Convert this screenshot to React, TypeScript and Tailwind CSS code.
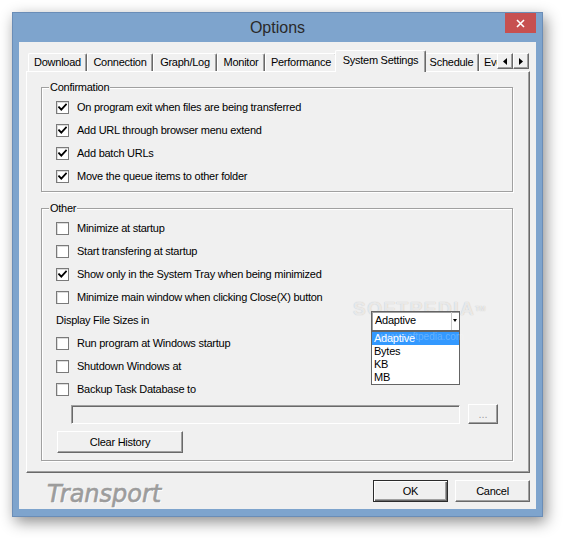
import React from 'react';

const CheckBox = ({ on = false }: { on?: boolean }) => (
  <span className="w-[13px] h-[13px] shrink-0 bg-white border border-[#7a7a7a] shadow-[inset_1px_1px_0_#dcdcdc] flex items-center justify-center">
    {on && (
      <svg width="9" height="9" viewBox="0 0 9 9" fill="none">
        <path d="M1 4.2 L3.3 6.6 L8 1.6" stroke="#000" strokeWidth="1.8" strokeLinecap="square" />
      </svg>
    )}
  </span>
);

const Row = ({ label, on }: { label: string; on?: boolean }) => (
  <div className="h-[23px] flex items-center gap-[8px]">
    <CheckBox on={on} />
    <span className="whitespace-nowrap">{label}</span>
  </div>
);

const raised =
  'bg-[#f0f0f0] border border-t-white border-l-white border-r-[#696969] border-b-[#696969] shadow-[inset_-1px_-1px_0_#a0a0a0]';

const Tab = ({ label, w, active = false }: { label: string; w: string; active?: boolean }) =>
  active ? (
    <div className={`${w} relative z-10 h-[22px] -mx-[2px] pb-[2px] flex items-center justify-center shrink-0 whitespace-nowrap bg-[#f0f0f0] border-t border-l border-t-white border-l-white border-r border-r-[#696969] shadow-[inset_-1px_0_0_#a0a0a0] rounded-t-[2px]`}>
      {label}
    </div>
  ) : (
    <div className={`${w} h-[18px] mb-[1px] flex items-center justify-center shrink-0 whitespace-nowrap bg-[#f0f0f0] border-t border-l border-t-white border-l-white border-r border-r-[#696969] shadow-[inset_-1px_0_0_#a0a0a0] rounded-t-[2px]`}>
      {label}
    </div>
  );

const Group = ({ title, children, className = '' }: { title: string; children: React.ReactNode; className?: string }) => (
  <div className={`relative w-[472px] border border-[#a0a0a0] shadow-[inset_1px_1px_0_#fff,1px_1px_0_#fff] pl-[14px] pt-[8px] ${className}`}>
    <span className="absolute left-[7px] -top-[7px] px-[1px] leading-[13px] bg-[#f0f0f0]">{title}</span>
    {children}
  </div>
);

export default function App() {
  return (
    <div className="w-[563px] h-[538px] bg-white pt-[12px] pl-[12px] font-['Liberation_Sans',Arial,sans-serif] text-[11px] tracking-[-0.25px] text-black">
      <div className="relative w-[531px] h-[505px] flex flex-col bg-[#7ea4cd] border border-[#6a8db7] shadow-[3px_5px_14px_rgba(0,0,0,0.45)]">
        {/* title bar */}
        <div className="h-[29px] flex items-center justify-center text-[16px] tracking-normal text-[#2a2a2a]">Options</div>
        <div className="absolute top-0 right-[6px] w-[31px] h-[20px] bg-[#c75050] flex items-center justify-center">
          <svg width="9" height="9" viewBox="0 0 9 9">
            <path d="M1 1 L8 8 M8 1 L1 8" stroke="#fff" strokeWidth="1.6" />
          </svg>
        </div>

        {/* client */}
        <div className="ml-[6px] w-[517px] h-[467px] bg-[#f0f0f0] pl-[7px] pt-[8px] flex flex-col">
          <div className="w-[504px]">
            <div className="relative z-10 h-[22px] flex">
              <div className="w-[471px] h-[22px] flex items-end overflow-hidden pl-[2px]">
                <Tab w="w-[59px]" label="Download" />
                <Tab w="w-[66px]" label="Connection" />
                <Tab w="w-[64px]" label="Graph/Log" />
                <Tab w="w-[48px]" label="Monitor" />
                <Tab w="w-[72px]" label="Performance" />
                <Tab w="w-[91px]" label="System Settings" active />
                <Tab w="w-[55px]" label="Schedule" />
                <div className="w-[60px] h-[18px] mb-[1px] pl-[4px] flex items-center shrink-0 whitespace-nowrap bg-[#f0f0f0] border-t border-l border-t-white border-l-white rounded-t-[2px]">
                  Event
                </div>
              </div>
              <div className="flex items-start pt-[3px]">
                <div className={`${raised} w-[16px] h-[16px] flex items-center justify-center`}>
                  <svg width="4" height="7" viewBox="0 0 4 7"><path d="M4 0 L0 3.5 L4 7 Z" fill="#000" /></svg>
                </div>
                <div className={`${raised} w-[16px] h-[16px] flex items-center justify-center`}>
                  <svg width="4" height="7" viewBox="0 0 4 7"><path d="M0 0 L4 3.5 L0 7 Z" fill="#000" /></svg>
                </div>
              </div>
            </div>

            {/* tab panel */}
            <div className="-mt-[1px] w-[504px] h-[402px] border border-t-white border-l-white border-r-[#696969] border-b-[#696969] shadow-[inset_-1px_-1px_0_#a0a0a0] pt-[15px] pl-[14px]">
              <Group title="Confirmation" className="pb-[3px]">
                <Row label="On program exit when files are being transferred" on />
                <Row label="Add URL through browser menu extend" on />
                <Row label="Add batch URLs" on />
                <Row label="Move the queue items to other folder" on />
              </Group>

              <Group title="Other" className="mt-[16px] pb-[7px]">
                <Row label="Minimize at startup" />
                <Row label="Start transfering at startup" />
                <Row label="Show only in the System Tray when being minimized" on />
                <Row label="Minimize main window when clicking Close(X) button" />
                <div className="h-[23px] flex items-center">
                  <span className="w-[315px] whitespace-nowrap">Display File Sizes in</span>
                  <div className="relative">
                    <span className="absolute -left-[18px] -top-[13px] text-[19px] leading-[22px] font-bold tracking-[1.5px] text-white/70 [text-shadow:0_0_1px_#b4b4b4] whitespace-nowrap pointer-events-none">
                      SOFTPEDIA<sup className="text-[7px] tracking-normal">TM</sup>
                    </span>
                    <div className="relative w-[89px] h-[20px] bg-white border border-[#646464] shadow-[inset_1px_1px_0_#a0a0a0] pl-[3px] flex items-center justify-between">
                      <span>Adaptive</span>
                      <div className="h-full w-[6px] border-l border-[#c8c8c8] flex items-center justify-center mr-[2px]">
                        <svg width="4" height="3" viewBox="0 0 4 3"><path d="M0 0 L4 0 L2 3 Z" fill="#000" /></svg>
                      </div>
                    </div>
                    <div className="absolute left-0 top-full z-20 w-[89px] bg-white border border-[#646464] flex flex-col">
                      <span className="h-[13px] leading-[13px] pl-[2px] bg-[#3399ff] text-white">Adaptive</span>
                      <span className="h-[13px] leading-[13px] pl-[2px]">Bytes</span>
                      <span className="h-[13px] leading-[13px] pl-[2px]">KB</span>
                      <span className="h-[13px] leading-[13px] pl-[2px]">MB</span>
                      <span className="absolute left-[6px] -top-[3px] text-[10px] tracking-normal text-white/25 whitespace-nowrap">www.softpedia.com</span>
                    </div>
                  </div>
                </div>
                <Row label="Run program at Windows startup" />
                <Row label="Shutdown Windows at" />
                <Row label="Backup Task Database to" />
                <div className="mt-[3px] flex items-center gap-[8px]">
                  <div className="ml-[15px] w-[389px] h-[19px] bg-[#f0f0f0] border border-t-[#a0a0a0] border-l-[#a0a0a0] border-r-white border-b-white shadow-[inset_1px_1px_0_#696969]" />
                  <div className={`${raised} w-[30px] h-[20px] flex items-center justify-center text-[#a0a0a0] tracking-normal`}>...</div>
                </div>
                <div className={`${raised} mt-[7px] ml-[1px] w-[126px] h-[22px] flex items-center justify-center`}>Clear History</div>
              </Group>
            </div>
          </div>

          {/* bottom */}
          <div className="flex-1 flex items-start pt-[7px] pr-[6px]">
            <span className="ml-[21px] mt-[2px] leading-[24px] text-[24px] italic tracking-normal font-['DejaVu_Sans',sans-serif] text-[#9c9c9c] [-webkit-text-stroke:0.6px_#9c9c9c] [text-shadow:1px_1px_0_#fff]">
              Transport
            </span>
            <div className="ml-auto w-[75px] h-[22px] flex items-center justify-center bg-[#f0f0f0] border border-[#2b2b2b] shadow-[inset_1px_1px_0_#fff,inset_-1px_-1px_0_#696969,inset_-2px_-2px_0_#a0a0a0]">
              OK
            </div>
            <div className={`${raised} ml-[7px] w-[75px] h-[22px] flex items-center justify-center`}>Cancel</div>
          </div>
        </div>
      </div>
    </div>
  );
}
